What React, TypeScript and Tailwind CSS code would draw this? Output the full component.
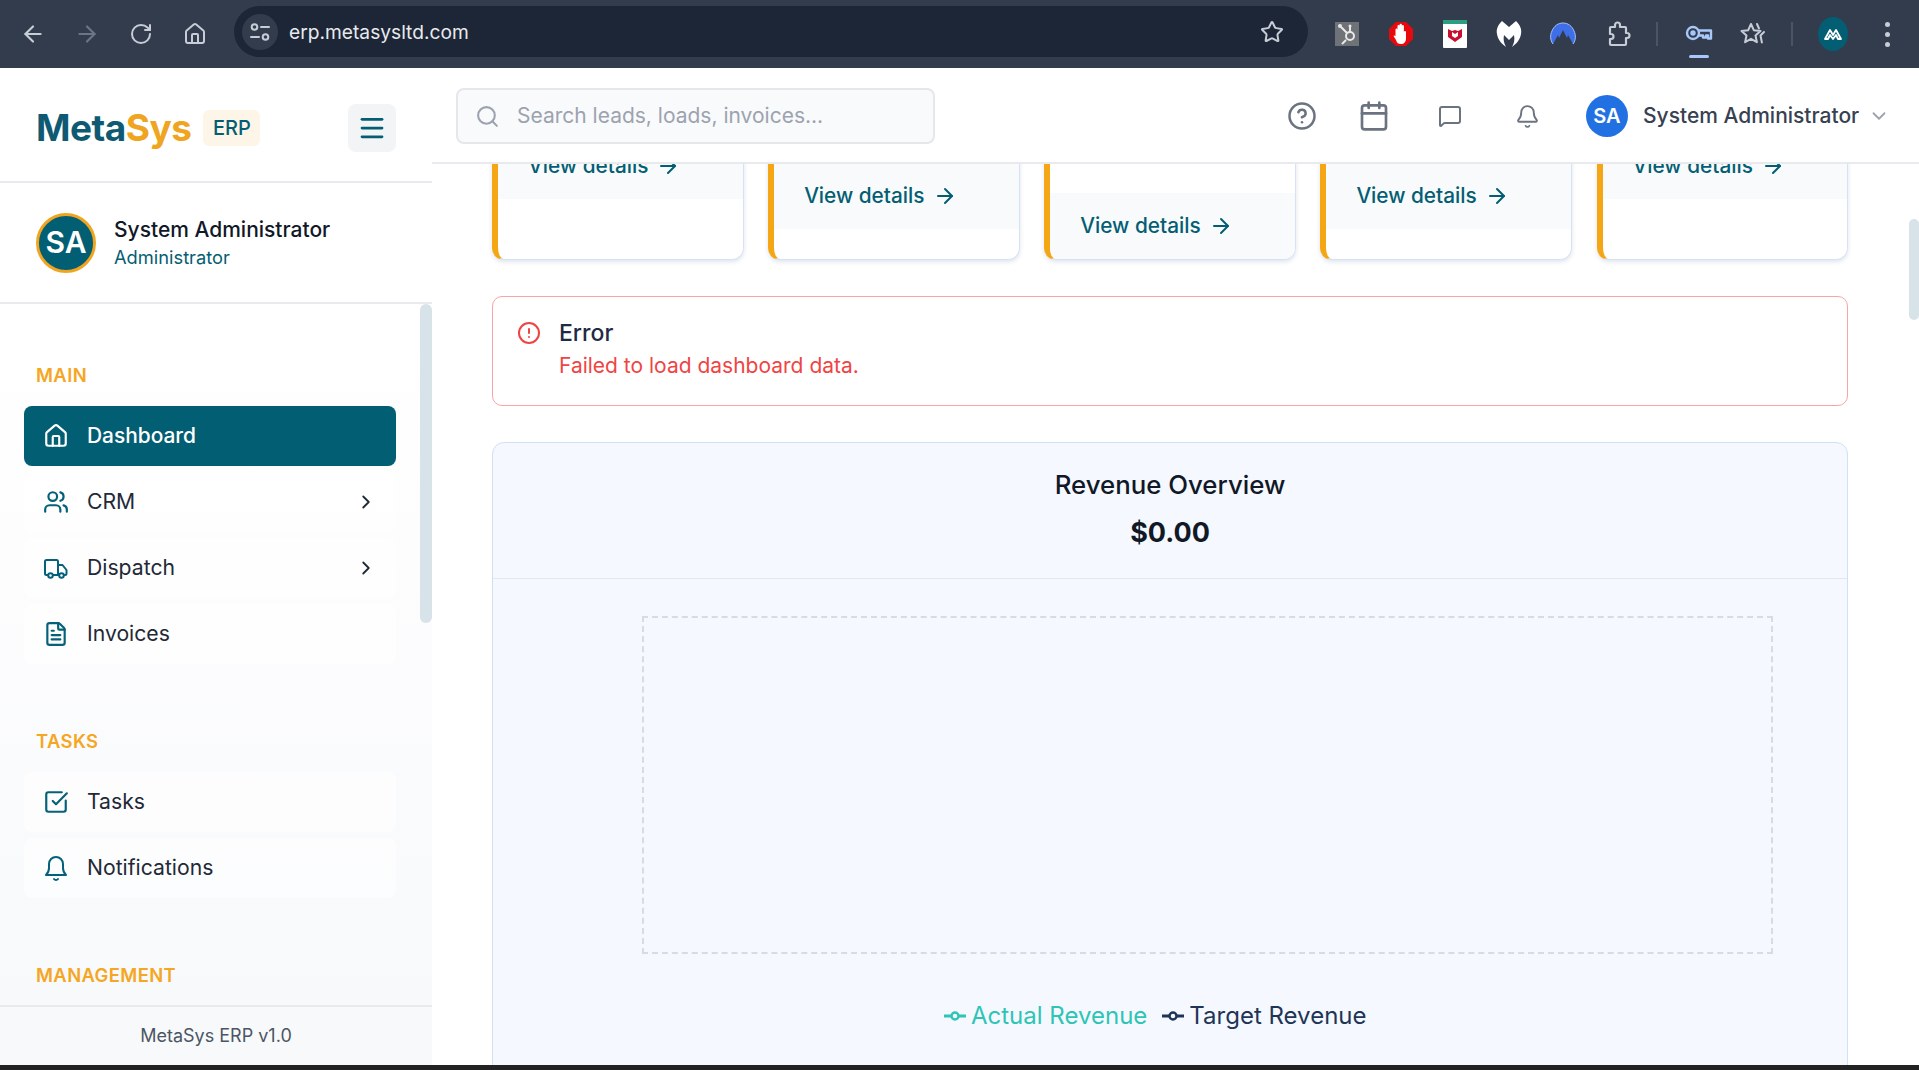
import { ArrowLeft, ArrowRight, ChevronDown, ChevronRight, CircleAlert, CircleHelp, FileText, Home, MessageSquare, Menu, RotateCw, Search, SquareCheckBig, Star, Users, Bell, Calendar } from "lucide-react";
import type { ReactNode } from "react";

function TuneIcon() {
  return (
    <svg width="22" height="22" viewBox="0 0 22 22" fill="none" stroke="#c7cdd6" strokeWidth="2" strokeLinecap="round">
      <circle cx="5.5" cy="6" r="2.8" />
      <path d="M12 6h8" />
      <path d="M2 16h8" />
      <circle cx="16.5" cy="16" r="2.8" />
    </svg>
  );
}

function TruckIcon() {
  return (
    <svg width="26" height="26" viewBox="0 0 26 26" fill="none" stroke="#04617a" strokeWidth="2" strokeLinecap="round" strokeLinejoin="round">
      <path d="M5 20H3.5A1.5 1.5 0 0 1 2 18.500V6.500A1.500 1.500 0 0 1 3.500 5H13.500A1.500 1.500 0 0 1 15 6.500V20H10" />
      <path d="M15 10h4.500l4 5v3.500A1.500 1.500 0 0 1 22 20h-1" />
      <path d="M15 20h1" />
      <circle cx="7.500" cy="20.500" r="2.300" />
      <circle cx="18.500" cy="20.500" r="2.300" />
    </svg>
  );
}

function SideBellIcon() {
  return (
    <svg width="26" height="28" viewBox="0 0 26 28" fill="none" stroke="#04617a" strokeWidth="2" strokeLinecap="round" strokeLinejoin="round">
      <path d="M3 21h20c-2-2-3-3.500-3-7V10a7 7 0 0 0-14 0v4c0 3.500-1 5-3 7z" />
      <path d="M11 25c1 1.300 3 1.300 4 0" />
    </svg>
  );
}

function HubspotIcon() {
  return (
    <svg width="24" height="24" viewBox="0 0 24 24">
      <rect width="24" height="24" fill="#6f7276" />
      <g fill="none" stroke="#e8e8e8" strokeWidth="2">
        <circle cx="15" cy="14" r="4" />
        <path d="M6 5l6 6M15 5v5M11 18l-4 4" />
      </g>
      <circle cx="5" cy="4" r="2" fill="#e8e8e8" />
      <circle cx="15" cy="4" r="1.500" fill="#e8e8e8" />
    </svg>
  );
}

function AdblockIcon() {
  return (
    <svg width="26" height="26" viewBox="0 0 26 26">
      <path d="M8 1h10l7 7v10l-7 7H8l-7-7V8z" fill="#e8090c" />
      <path d="M7.500 15V8.500a1 1 0 0 1 2 0V5a1 1 0 0 1 2 0V4a1 1 0 0 1 2.400 0v1a1 1 0 0 1 2 0v6a1 1 0 0 1 2.100 0v6c0 4-2 6-5 6s-4-1-5-4l-2.500-4c.5-1 1.500-.5 2 0z" fill="#fff" />
    </svg>
  );
}

function McafeeIcon() {
  return (
    <svg width="24" height="28" viewBox="0 0 24 28">
      <rect y="0" width="24" height="28" rx="1" fill="#fff" />
      <rect y="0" width="24" height="4" fill="#2e9e80" />
      <path d="M5 9l4 2 3-1 3 1 4-2v8l-7 5-7-5z" fill="#c8102e" />
      <path d="M9 12v4l3 2 3-2v-4l-3 2z" fill="#fff" />
    </svg>
  );
}

function MalwarebytesIcon() {
  return (
    <svg width="26" height="28" viewBox="0 0 26 28">
      <path d="M6 1l7 6 7-6c4 4 6 8 5 13-1 6-5 10-9 13 2-4 3-7 2-12l-5 5-5-5c-1 5 0 8 2 12-4-3-8-7-9-13C0 9 2 5 6 1z" fill="#fff" />
    </svg>
  );
}

function NordIcon() {
  return (
    <svg width="26" height="26" viewBox="0 0 26 26">
      <path d="M3 23C0 19 0 14 2 10 4 5 8 2 13 2s9 3 11 8c2 4 2 9-1 13l-5-9-1 3-4-8-4 8-1-3z" fill="#3f6fe8" />
      <path d="M3 23C0 19 0 14 2 10 4 5 8 2 13 2s9 3 11 8c2 4 2 9-1 13" fill="none" stroke="#aac4f5" strokeWidth="1" />
    </svg>
  );
}

function ExtensionsIcon() {
  return (
    <svg width="28" height="28" viewBox="0 0 28 28" fill="none" stroke="#c7cdd6" strokeWidth="2.200" strokeLinejoin="round">
      <path d="M6 7h4V5a2.500 2.500 0 0 1 5 0v2h5a1 1 0 0 1 1 1v5h1a2.500 2.500 0 0 1 0 5h-1v6a1 1 0 0 1-1 1H6a1 1 0 0 1-1-1v-5h1a2.500 2.500 0 0 0 0-5H5V8a1 1 0 0 1 1-1z" />
    </svg>
  );
}

function KeyIcon() {
  return (
    <svg width="28" height="20" viewBox="0 0 28 20" fill="none" stroke="#a8c7fa" strokeWidth="2.400" strokeLinejoin="round">
      <circle cx="8" cy="9" r="6" />
      <circle cx="8" cy="9" r="1.500" fill="#a8c7fa" />
      <path d="M14 6.500h12v8h-3v-3h-2v2h-3v-2h-4" />
    </svg>
  );
}

function StarsIcon() {
  return (
    <svg width="28" height="28" viewBox="0 0 28 28" fill="none" stroke="#c7cdd6" strokeWidth="2" strokeLinejoin="round" strokeLinecap="round">
      <path d="M12 4l2.800 6.200 6.700.8-5 4.500 1.400 6.700L12 18.800 6.100 22.200l1.400-6.700-5-4.500 6.700-.8z" />
      <path d="M18 4l2 4.500M25 12l-3.500 3.500 1.400 7" />
    </svg>
  );
}

function ProfileLogo() {
  return (
    <svg width="30" height="34" viewBox="0 0 30 34">
      <ellipse cx="15" cy="17" rx="15" ry="17" fill="#045e73" />
      <path d="M7 22l5-9 3 5 3-5 5 9h-3l-2-4-3 4-3-4-2 4z" fill="none" stroke="#fff" strokeWidth="1.800" strokeLinejoin="round" />
    </svg>
  );
}

function LegendMark({ color }: { color: string }) {
  return (
    <svg width="22" height="12" viewBox="0 0 22 12" fill="none" stroke={color} strokeWidth="3">
      <path d="M0 6h7M15 6h7" />
      <circle cx="11" cy="6" r="3.500" fill="#f5f8ff" strokeWidth="2.500" />
    </svg>
  );
}

function ChromeSlot({ className, children }: { className?: string; children: ReactNode }) {
  return <div className={"flex h-[54px] w-[54px] shrink-0 items-center justify-center " + (className || "")}>{children}</div>;
}

function BrowserBar() {
  return (
    <div className="flex h-[68px] shrink-0 items-center bg-[#323c4d] pl-[6px]">
      <ChromeSlot><ArrowLeft size={26} className="text-[#c7cdd6]" /></ChromeSlot>
      <ChromeSlot><ArrowRight size={26} className="text-[#6d7584]" /></ChromeSlot>
      <ChromeSlot><RotateCw size={24} className="text-[#c7cdd6]" /></ChromeSlot>
      <ChromeSlot><Home size={24} className="text-[#c7cdd6]" /></ChromeSlot>
      <div className="mb-[5px] ml-[12px] flex h-[51px] w-[1074px] shrink-0 items-center rounded-full bg-[#1c2636] pl-[8px] pr-[24px]">
        <div className="flex h-[36px] w-[36px] items-center justify-center rounded-full bg-[#323c4d]"><TuneIcon /></div>
        <span className="ml-[11px] flex-1 pt-[1px] text-[19.200px] text-[#e8eaed]">erp.metasysltd.com</span>
        <Star size={24} className="text-[#c7cdd6]" />
      </div>
      <ChromeSlot className="ml-[12px]"><HubspotIcon /></ChromeSlot>
      <ChromeSlot><AdblockIcon /></ChromeSlot>
      <ChromeSlot><McafeeIcon /></ChromeSlot>
      <ChromeSlot><MalwarebytesIcon /></ChromeSlot>
      <ChromeSlot><NordIcon /></ChromeSlot>
      <ChromeSlot className="ml-[2px]"><ExtensionsIcon /></ChromeSlot>
      <div className="ml-[10px] h-[24px] w-[2px] shrink-0 bg-[#4a5464]" />
      <ChromeSlot className="relative ml-[14px]">
        <KeyIcon />
        <span className="absolute bottom-[3px] h-[3px] w-[20px] rounded-full bg-[#a8c7fa]" />
      </ChromeSlot>
      <ChromeSlot><StarsIcon /></ChromeSlot>
      <div className="ml-[11px] h-[24px] w-[2px] shrink-0 bg-[#4a5464]" />
      <ChromeSlot className="ml-[13px]"><ProfileLogo /></ChromeSlot>
      <ChromeSlot>
        <div className="flex flex-col gap-[5px]">
          <span className="h-[5px] w-[5px] rounded-full bg-[#c7cdd6]" />
          <span className="h-[5px] w-[5px] rounded-full bg-[#c7cdd6]" />
          <span className="h-[5px] w-[5px] rounded-full bg-[#c7cdd6]" />
        </div>
      </ChromeSlot>
    </div>
  );
}

function NavItem({ icon, label, active, arrow }: { icon: ReactNode; label: string; active?: boolean; arrow?: boolean }) {
  return (
    <div className={"flex h-[60px] items-center rounded-[8px] pl-[19px] pr-[19px] text-[21.200px] " + (active ? "bg-[#025e73] font-medium text-white" : "bg-white/50 text-[#1f2937]")}>
      <span className="flex w-[26px] justify-center">{icon}</span>
      <span className={"ml-[18px] flex-1 " + (active ? "text-[20.900px]" : "")}>{label}</span>
      {arrow && <ChevronRight size={22} className="text-[#1f2937]" />}
    </div>
  );
}

function SectionLabel({ children, className }: { children: string; className?: string }) {
  return <div className={"h-[24px] pl-[36px] text-[18.400px] leading-[24px] font-semibold tracking-[0.4px] text-[#f5a623] " + (className || "")}>{children}</div>;
}

function Sidebar() {
  return (
    <aside className="flex w-[432px] shrink-0 flex-col bg-white">
      <div className="flex h-[115px] shrink-0 items-center border-b-2 border-[#e8eaed] pt-[6px] pl-[36px] pr-[36px]">
        <span className="text-[37px] leading-none font-bold tracking-[-0.5px]">
          <span className="text-[#0f5a73]">Meta</span>
          <span className="text-[#f0a520]">Sys</span>
        </span>
        <span className="ml-[12px] flex h-[36px] w-[57px] items-center justify-center rounded-[6px] bg-[#fef5e9] text-[20px] font-medium text-[#045e73]">ERP</span>
        <div className="ml-auto flex h-[48px] w-[48px] items-center justify-center rounded-[8px] bg-[#f3f4f6]">
          <Menu size={30} strokeWidth={2.2} className="text-[#045e73]" />
        </div>
      </div>
      <div className="flex h-[121px] shrink-0 items-center border-b-2 border-[#e8eaed] pl-[36px]">
        <div className="flex h-[60px] w-[60px] items-center justify-center rounded-full border-[3px] border-[#f0a520] bg-[#025e73] text-[30px] font-semibold text-white">SA</div>
        <div className="ml-[18px] pt-[1px]">
          <div className="text-[21px] leading-[28px] font-medium text-[#111827]">System Administrator</div>
          <div className="text-[18.300px] leading-[26px] text-[#045e73]">Administrator</div>
        </div>
      </div>
      <div className="relative min-h-0 flex-1 overflow-hidden bg-gradient-to-b from-white to-[#f8f9fb] pt-[59px]">
        <span className="absolute top-0 right-0 h-[319px] w-[12px] rounded-full bg-[#d7e3e8]" />
        <SectionLabel>MAIN</SectionLabel>
        <div className="mt-[19px] flex w-[396px] flex-col gap-[6px] pl-[24px]">
          <NavItem active label="Dashboard" icon={<Home size={26} className="text-white" />} />
          <NavItem arrow label="CRM" icon={<Users size={26} className="text-[#04617a]" />} />
          <NavItem arrow label="Dispatch" icon={<TruckIcon />} />
          <NavItem label="Invoices" icon={<FileText size={26} className="text-[#04617a]" />} />
        </div>
        <SectionLabel className="mt-[65px]">TASKS</SectionLabel>
        <div className="mt-[19px] flex w-[396px] flex-col gap-[6px] pl-[24px]">
          <NavItem label="Tasks" icon={<SquareCheckBig size={26} className="text-[#04617a]" />} />
          <NavItem label="Notifications" icon={<SideBellIcon />} />
        </div>
        <SectionLabel className="mt-[65px]">MANAGEMENT</SectionLabel>
      </div>
      <div className="flex h-[60px] shrink-0 items-center justify-center border-t-2 border-[#e8eaed] bg-[#f8f9fb] pb-[2px] text-[18px] text-[#4b5563]">MetaSys ERP v1.0</div>
    </aside>
  );
}

function TopBar() {
  return (
    <header className="flex h-[96px] shrink-0 items-center border-b-2 border-[#e8eaed] bg-white pt-[2px] pl-[24px]">
      <div className="flex h-[56px] w-[479px] items-center rounded-[8px] border-2 border-[#e5e7eb] bg-[#f9fafb] pl-[17px]">
        <Search size={25} className="text-[#9ca3af]" />
        <span className="ml-[17px] text-[21px] text-[#9ca3af]">Search leads, loads, invoices...</span>
      </div>
      <CircleHelp size={30} className="ml-[352px] text-[#6b7280]" />
      <Calendar size={32} className="ml-[41px] text-[#6b7280]" />
      <MessageSquare size={24} className="ml-[48px] text-[#6b7280]" />
      <Bell size={25} strokeWidth={1.8} className="ml-[53px] text-[#6b7280]" />
      <div className="ml-[46px] flex h-[42px] w-[42px] items-center justify-center rounded-full bg-[#2271e3] text-[20px] font-semibold text-white">SA</div>
      <span className="ml-[15px] text-[21px] font-medium text-[#374151]">System Administrator</span>
      <ChevronDown size={22} className="ml-[9px] text-[#9ca3af]" />
    </header>
  );
}

function StatCard({ gap }: { gap: string }) {
  return (
    <div className="flex h-[200px] flex-1 flex-col justify-end overflow-hidden rounded-[12px] border border-l-[6px] border-[#d4e2f8] border-l-[#f5a614] bg-white shadow-[0_2px_4px_rgba(60,90,140,0.16)]">
      <div className={"flex h-[66px] shrink-0 items-center gap-[8px] bg-[#f8fafc] pl-[30px] text-[20.800px] font-medium text-[#045e73] " + gap}>
        View details
        <ArrowRight size={24} />
      </div>
    </div>
  );
}

function Dashboard() {
  return (
    <div className="relative min-h-0 flex-1 overflow-hidden bg-white">
      <span className="absolute top-[55px] right-0 z-10 h-[101px] w-[10px] rounded-full bg-[#d7e3e8]" />
      <div className="-mt-[104px] ml-[60px] w-[1356px]">
        <div className="flex gap-[24.600px]">
          <StatCard gap="mb-[60px]" />
          <StatCard gap="mb-[30px]" />
          <StatCard gap="mb-0" />
          <StatCard gap="mb-[30px]" />
          <StatCard gap="mb-[60px]" />
        </div>
        <div className="mt-[36px] flex h-[110px] rounded-[10px] border border-[#f9a5a5] bg-white pt-[21px] pl-[24px]">
          <CircleAlert size={24} className="mt-[3px] text-[#ef4444]" />
          <div className="ml-[18px]">
            <div className="text-[23px] leading-[30px] font-medium text-[#1f2a44]">Error</div>
            <div className="mt-[3px] text-[21px] leading-[30px] text-[#ef4444]">Failed to load dashboard data.</div>
          </div>
        </div>
        <div className="mt-[36px] h-[640px] rounded-[12px] border border-[#cfe0f8] bg-[#f5f8ff]">
          <div className="h-[136px] border-b border-[#e2e8f0] pt-[24px] text-center">
            <div className="text-[25.800px] leading-[36px] font-medium text-[#111827]">Revenue Overview</div>
            <div className="mt-[12px] text-[27px] leading-[36px] font-bold text-[#111827]">$0.00</div>
          </div>
          <div className="mt-[37px] ml-[149px] h-[338px] w-[1131px] border-2 border-dashed border-[#d8dbe0]" />
          <div className="mt-[37px] flex h-[50px] items-center pl-[451px] text-[24px]">
            <LegendMark color="#2ec4b6" />
            <span className="ml-[5px] text-[#2ec4b6]">Actual Revenue</span>
            <span className="ml-[15px]"><LegendMark color="#1f3557" /></span>
            <span className="ml-[5px] text-[#1f3557]">Target Revenue</span>
          </div>
        </div>
      </div>
    </div>
  );
}

export default function App() {
  return (
    <div className="flex h-[1070px] w-[1919px] flex-col overflow-hidden bg-[#222222] font-['Inter',sans-serif]">
      <BrowserBar />
      <div className="flex h-[997px] shrink-0">
        <Sidebar />
        <main className="flex min-w-0 flex-1 flex-col">
          <TopBar />
          <Dashboard />
        </main>
      </div>
    </div>
  );
}
